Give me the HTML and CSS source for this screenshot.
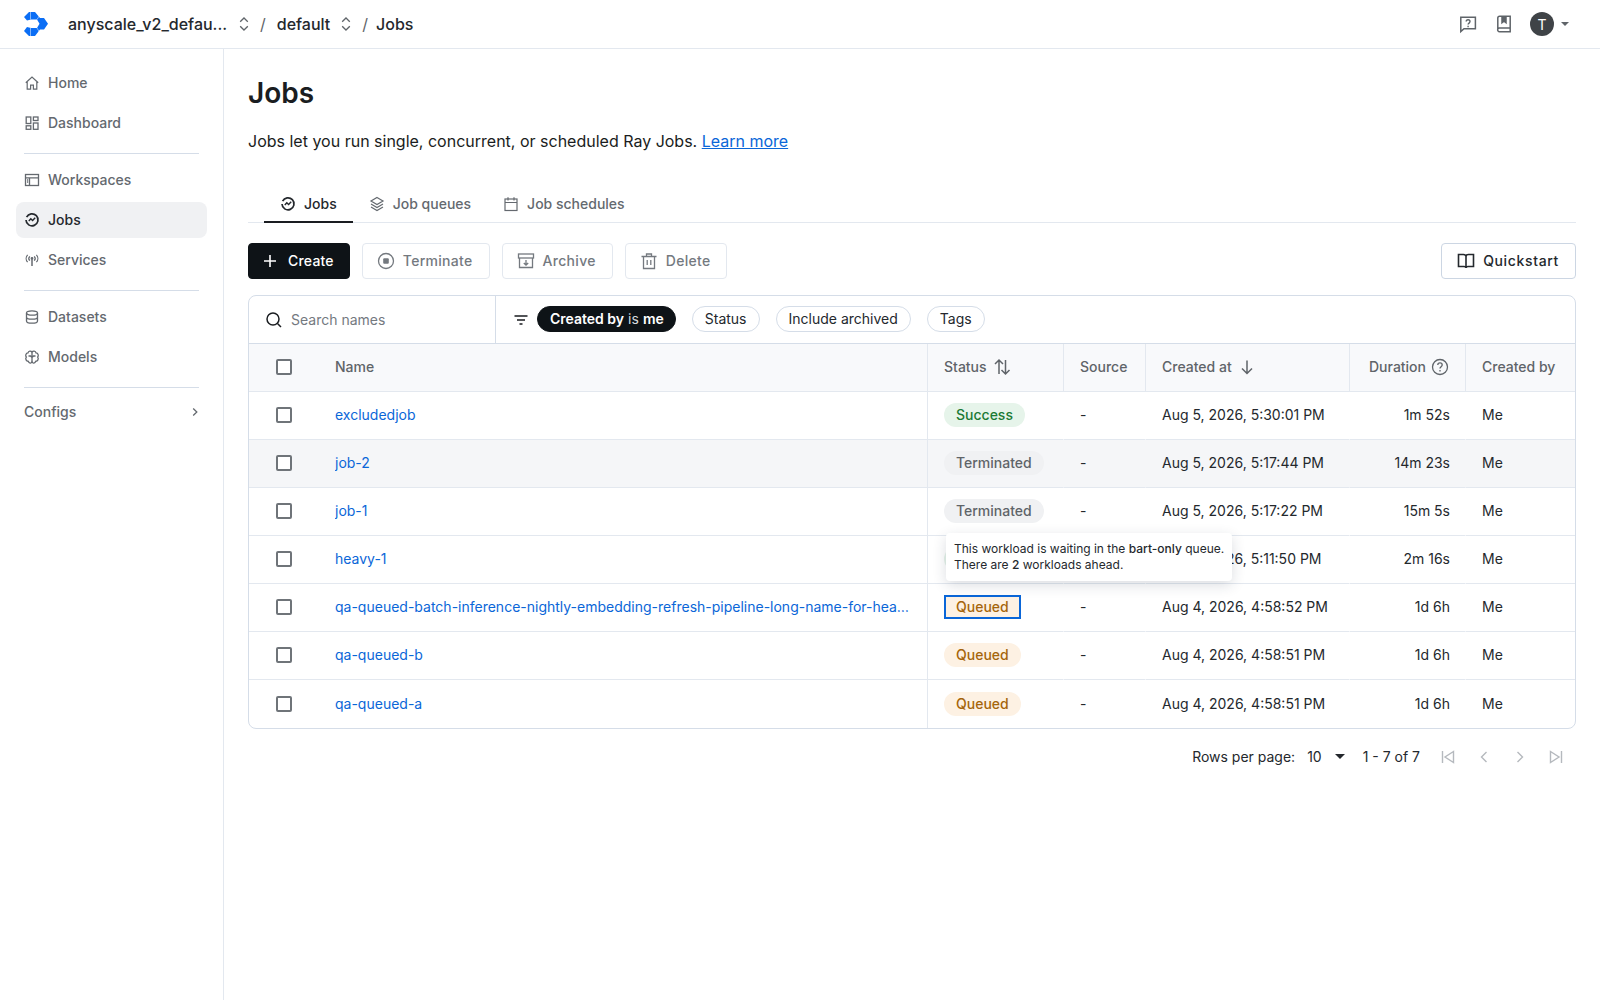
FILE: index.html
```html
<!DOCTYPE html>
<html lang="en">
<head>
    <meta charset="UTF-8">
    <title>Jobs</title>
    <link rel="stylesheet" href="styles.css">
</head>
<body>
<svg class="defs" width="0" height="0">
    <symbol id="i-jobs" viewBox="0 0 16 16">
        <path d="M2.600 5.200A6 6 0 1 1 2 8" fill="none" stroke="currentColor" stroke-width="1.700"/>
        <path d="M4.800 9 6.800 6.800 8.600 8.600 11.200 5.800" fill="none" stroke="currentColor" stroke-width="1.400"/>
    </symbol>
    <symbol id="i-updown" viewBox="0 0 16 16">
        <path d="M4.200 5.800 8 2l3.800 3.800M4.200 10.200 8 14l3.800-3.800" fill="none" stroke="currentColor" stroke-width="1.300"/>
    </symbol>
</svg>

<!--top bar-->
<header class="topbar">
    <svg class="logo" width="24" height="24" viewBox="0 0 24 24">
        <path fill="#0b6ef5" d="M0 5 5 0H11L16 6H20L24 11.700 20 17.500H16L11 24H5L0 19 3 15 7 16H13L15.500 11.700 13 7.500H7L3 8.500Z"/>
        <path d="M6.500 0V7.500M6.500 16V24M13 7.500 16.500 2M13 16 16.500 22" stroke="#fff" stroke-width=".5"/>
    </svg>
    <nav class="crumbs">
        <span class="crumb crumb-project">anyscale_v2_defau...</span>
        <svg class="crumb-icon" width="16" height="16"><use href="#i-updown"/></svg>
        <span class="crumb-sep">/</span>
        <span class="crumb">default</span>
        <svg class="crumb-icon" width="16" height="16"><use href="#i-updown"/></svg>
        <span class="crumb-sep">/</span>
        <span class="crumb crumb-last">Jobs</span>
    </nav>
    <div class="top-actions">
        <svg width="20" height="20" viewBox="0 0 20 20" fill="none" stroke="#5f6469" stroke-width="1.500">
            <path d="M2.800 3.200h14.600v11.600H6L2.800 17.600z"/>
            <path d="M8.200 7.600c0-2.400 3.800-2.400 3.800 0 0 1.500-1.900 1.500-1.900 3" stroke-width="1.400"/>
            <path d="M10.100 11.800v1.400" stroke-width="1.400"/>
        </svg>
        <svg width="20" height="20" viewBox="0 0 20 20" fill="none" stroke="#5f6469" stroke-width="1.500">
            <path d="M3.800 15V4a1.800 1.800 0 0 1 1.800-1.800h10.600v15.600H5.600a2 2 0 0 1-1.800-2.800 1.800 1.800 0 0 1 1.800-1H16.200"/>
            <path d="M8 2.400v6.400l2-1.600 2 1.600V2.400" fill="#5f6469"/>
        </svg>
        <div class="user">
            <span class="avatar">T</span>
            <span class="caret"></span>
        </div>
    </div>
</header>

<div class="layout">
    <!--sidebar-->
    <aside class="sidebar">
        <a class="nav-item">
            <svg width="16" height="16" viewBox="0 0 16 16" fill="none" stroke="currentColor" stroke-width="1.200"><path d="M1.800 7.800 8 2l6.200 5.800M3.200 6.800v7.400h3.400v-4h2.800v4h3.400V6.800"/></svg>
            Home
        </a>
        <a class="nav-item">
            <svg width="16" height="16" viewBox="0 0 16 16" fill="none" stroke="currentColor" stroke-width="1.300"><rect x="2.200" y="2" width="4.600" height="6.500"/><rect x="9.400" y="2" width="4.600" height="3.500"/><rect x="2.200" y="10.800" width="4.600" height="3.500"/><rect x="9.400" y="8" width="4.600" height="6.300"/></svg>
            Dashboard
        </a>
        <div class="nav-line"></div>
        <a class="nav-item">
            <svg width="16" height="16" viewBox="0 0 16 16" fill="none" stroke="currentColor" stroke-width="1.300"><rect x="1.500" y="2.500" width="13" height="11"/><path d="M1.500 5.800h13M5.500 5.800v7.700M3 8h1.200M3 10h1.200"/></svg>
            Workspaces
        </a>
        <a class="nav-item active">
            <svg width="16" height="16"><use href="#i-jobs"/></svg>
            Jobs
        </a>
        <a class="nav-item">
            <svg width="16" height="16" viewBox="0 0 16 16" fill="none" stroke="currentColor" stroke-width="1.200"><path d="M8 7.500v6.500" stroke-width="1.500"/><circle cx="8" cy="6.500" r=".8" fill="currentColor"/><path d="M5.800 4.300a3.200 3.200 0 0 0 0 4.400M10.200 4.300a3.200 3.200 0 0 1 0 4.400M3.600 2.800a5.500 5.500 0 0 0 0 7.400M12.400 2.800a5.500 5.500 0 0 1 0 7.400"/></svg>
            Services
        </a>
        <div class="nav-line"></div>
        <a class="nav-item">
            <svg width="16" height="16" viewBox="0 0 16 16" fill="none" stroke="currentColor" stroke-width="1.300"><ellipse cx="8" cy="4" rx="5.500" ry="2.200"/><path d="M2.500 4v8c0 1.200 2.500 2.200 5.500 2.200s5.500-1 5.500-2.200V4M2.500 8c0 1.200 2.500 2.200 5.500 2.200s5.500-1 5.500-2.200"/></svg>
            Datasets
        </a>
        <a class="nav-item">
            <svg width="16" height="16" viewBox="0 0 16 16" fill="none" stroke="currentColor" stroke-width="1.300"><path d="M8 3.200C7 1.500 4.500 1.800 4 3.800 2 4 1 6.500 2.300 8 1 9.800 2.300 12.500 4.300 12.300 5 14.500 7.200 14.500 8 13c.8 1.500 3 1.500 3.700-.7 2 .2 3.300-2.500 2-4.300C15 6.500 14 4 12 3.800 11.500 1.800 9 1.500 8 3.200Z"/><path d="M8 3.200V13M4.500 7h2l1.500 1.500M11.500 7h-2L8 8.500"/></svg>
            Models
        </a>
        <div class="nav-line"></div>
        <a class="nav-group">
            Configs
            <svg width="16" height="16" viewBox="0 0 16 16" fill="none" stroke="currentColor" stroke-width="1.300"><path d="M6.200 4.500 9.800 8l-3.600 3.500"/></svg>
        </a>
    </aside>

    <!--main-->
    <main class="main">
        <h1 class="title">Jobs</h1>
        <p class="intro">Jobs let you run single, concurrent, or scheduled Ray Jobs. <a href="#" class="link">Learn more</a></p>

        <div class="tabs">
            <a class="tab current"><svg width="16" height="16"><use href="#i-jobs"/></svg>Jobs</a>
            <a class="tab">
                <svg width="16" height="16" viewBox="0 0 16 16" fill="none" stroke="currentColor" stroke-width="1.200"><path d="M8 1.500 14 5 8 8.500 2 5ZM2 8l6 3.500L14 8M2 11l6 3.500 6-3.500"/></svg>
                Job queues
            </a>
            <a class="tab">
                <svg width="16" height="16" viewBox="0 0 16 16" fill="none" stroke="currentColor" stroke-width="1.200"><rect x="2" y="3" width="12" height="11.500"/><path d="M2 6.500h12M5 1.200V4.500M11 1.200V4.500"/></svg>
                Job schedules
            </a>
        </div>

        <div class="actions">
            <a class="btn btn-dark">
                <svg width="16" height="16" viewBox="0 0 16 16" fill="none" stroke="#fff" stroke-width="1.600"><path d="M7 2v12M1 8h12"/></svg>
                Create
            </a>
            <a class="btn">
                <svg width="18" height="18" viewBox="0 0 18 18" fill="none" stroke="currentColor" stroke-width="1.300"><circle cx="9" cy="9" r="7.500"/><rect x="6.200" y="6.200" width="5.600" height="5.600" rx="1" fill="currentColor" stroke="none"/></svg>
                Terminate
            </a>
            <a class="btn">
                <svg width="18" height="18" viewBox="0 0 18 18" fill="none" stroke="currentColor" stroke-width="1.300"><rect x="1.500" y="2" width="15" height="4"/><path d="M2.500 6v9.500h13V6M9 8v5M6.800 11 9 13.200 11.200 11"/></svg>
                Archive
            </a>
            <a class="btn">
                <svg width="18" height="18" viewBox="0 0 18 18" fill="none" stroke="currentColor" stroke-width="1.300"><path d="M1.500 4.500h15M6.500 4.500V2h5v2.500M3.500 4.500v12h11v-12M7.200 8v5M10.800 8v5"/></svg>
                Delete
            </a>
            <a class="btn btn-outline">
                <svg width="18" height="18" viewBox="0 0 18 18" fill="none" stroke="currentColor" stroke-width="1.600"><path d="M9 4.500C9 3.200 8 2.500 6.500 2.500h-5v12h5.500c1 0 2 .5 2 1.500 0-1 1-1.500 2-1.500h5.500v-12h-5C10 2.500 9 3.200 9 4.500ZM9 4.500V16"/></svg>
                Quickstart
            </a>
        </div>

        <div class="panel">
            <div class="filters">
                <div class="search">
                    <svg width="18" height="18" viewBox="0 0 18 18" fill="none" stroke="#1a1d21" stroke-width="1.500"><circle cx="8" cy="8" r="6"/><path d="m12.500 12.500 3.500 3.500"/></svg>
                    <span>Search names</span>
                </div>
                <div class="chips">
                    <svg width="16" height="16" viewBox="0 0 16 16" fill="none" stroke="#1a1d21" stroke-width="1.500"><path d="M1.500 4h13M4 8h8M6.500 12h3"/></svg>
                    <span class="chip chip-on"><b>Created by</b> is <b>me</b></span>
                    <span class="chip">Status</span>
                    <span class="chip">Include archived</span>
                    <span class="chip">Tags</span>
                </div>
            </div>

            <table class="jobs">
                <colgroup>
                    <col class="c-check"><col class="c-name"><col class="c-status"><col class="c-source"><col class="c-created"><col class="c-duration"><col class="c-by">
                </colgroup>
                <thead>
                    <tr>
                        <th class="check"><span class="box"></span></th>
                        <th>Name</th>
                        <th class="split">
                            <span class="th-in">Status
                                <svg width="20" height="20" viewBox="0 0 20 20" fill="none" stroke="#5f6469" stroke-width="1.500"><path d="M7 17V3.500M3 7l4-4 4 4M13.500 3v13.500M9.500 13l4 4 4-4"/></svg>
                            </span>
                        </th>
                        <th class="split">Source</th>
                        <th class="split">
                            <span class="th-in">Created at
                                <svg class="sort" width="16" height="16" viewBox="0 0 16 16" fill="none" stroke="#5f6469" stroke-width="1.500"><path d="M8 1.500v13M3 9.500l5 5 5-5"/></svg>
                            </span>
                        </th>
                        <th class="split num">
                            <span class="th-in">Duration
                                <svg width="18" height="18" viewBox="0 0 18 18" fill="none" stroke="#5f6469" stroke-width="1.300"><circle cx="9" cy="9" r="7.500"/><path d="M6.800 7c0-2.800 4.400-2.800 4.400 0 0 1.700-2.200 1.700-2.200 3.500M9 12v1.400"/></svg>
                            </span>
                        </th>
                        <th class="split">Created by</th>
                    </tr>
                </thead>
                <tbody>
                    <tr>
                        <td class="check"><span class="box"></span></td>
                        <td><a href="#" class="job">excludedjob</a></td>
                        <td class="split"><span class="badge ok">Success</span></td>
                        <td>-</td>
                        <td>Aug 5, 2026, 5:30:01 PM</td>
                        <td class="num">1m 52s</td>
                        <td>Me</td>
                    </tr>
                    <tr class="hover">
                        <td class="check"><span class="box"></span></td>
                        <td><a href="#" class="job">job-2</a></td>
                        <td class="split"><span class="badge off">Terminated</span></td>
                        <td>-</td>
                        <td>Aug 5, 2026, 5:17:44 PM</td>
                        <td class="num">14m 23s</td>
                        <td>Me</td>
                    </tr>
                    <tr>
                        <td class="check"><span class="box"></span></td>
                        <td><a href="#" class="job">job-1</a></td>
                        <td class="split"><span class="badge off">Terminated</span></td>
                        <td>-</td>
                        <td>Aug 5, 2026, 5:17:22 PM</td>
                        <td class="num">15m 5s</td>
                        <td>Me</td>
                    </tr>
                    <tr>
                        <td class="check"><span class="box"></span></td>
                        <td><a href="#" class="job">heavy-1</a></td>
                        <td class="split"><span class="badge ok">Success</span></td>
                        <td>-</td>
                        <td>Aug 5, 2026, 5:11:50 PM</td>
                        <td class="num">2m 16s</td>
                        <td>Me</td>
                    </tr>
                    <tr>
                        <td class="check"><span class="box"></span></td>
                        <td><a href="#" class="job job-long">qa-queued-batch-inference-nightly-embedding-refresh-pipeline-long-name-for-heavy-workloads</a></td>
                        <td class="split">
                            <span class="badge wait focused">Queued
                                <span class="tooltip">This workload is waiting in the <b>bart-only</b> queue.<br>There are <b>2</b> workloads ahead.</span>
                            </span>
                        </td>
                        <td>-</td>
                        <td>Aug 4, 2026, 4:58:52 PM</td>
                        <td class="num">1d 6h</td>
                        <td>Me</td>
                    </tr>
                    <tr>
                        <td class="check"><span class="box"></span></td>
                        <td><a href="#" class="job">qa-queued-b</a></td>
                        <td class="split"><span class="badge wait">Queued</span></td>
                        <td>-</td>
                        <td>Aug 4, 2026, 4:58:51 PM</td>
                        <td class="num">1d 6h</td>
                        <td>Me</td>
                    </tr>
                    <tr class="last">
                        <td class="check"><span class="box"></span></td>
                        <td><a href="#" class="job">qa-queued-a</a></td>
                        <td class="split"><span class="badge wait">Queued</span></td>
                        <td>-</td>
                        <td>Aug 4, 2026, 4:58:51 PM</td>
                        <td class="num">1d 6h</td>
                        <td>Me</td>
                    </tr>
                </tbody>
            </table>
        </div>

        <div class="pager">
            <span>Rows per page:</span>
            <span class="pager-size">10</span>
            <span class="pager-caret"></span>
            <span class="pager-range">1 - 7 of 7</span>
            <div class="pager-btns">
                <svg width="16" height="16" viewBox="0 0 16 16"><path d="M2.500 2v12M13.500 2.500 5 8l8.500 5.500z"/></svg>
                <svg width="16" height="16" viewBox="0 0 16 16"><path d="M10.500 3 5.500 8l5 5"/></svg>
                <svg width="16" height="16" viewBox="0 0 16 16"><path d="M5.500 3l5 5-5 5"/></svg>
                <svg width="16" height="16" viewBox="0 0 16 16"><path d="M13.500 2v12M2.500 2.500 11 8l-8.500 5.500z"/></svg>
            </div>
        </div>
    </main>
</div>
</body>
</html>
```

FILE: styles.css
```css
*{
    box-sizing: border-box;
}
html,body{
    height: 100%;
}
body{
    margin: 0;
    font-family: Inter, "Noto Sans", sans-serif;
    font-size: 14px;
    color: #1a1d21;
    background: #fff;
    overflow: hidden;
}
a{
    text-decoration: none;
    color: inherit;
}
svg{
    flex: none;
    display: block;
}
.defs{
    position: absolute;
}

/*top bar*/
.topbar{
    display: flex;
    align-items: center;
    height: 49px;
    padding: 0 24px;
    border-bottom: 1px solid #e3e8ef;
}
.logo{
    margin-right: 20px;
}
.crumbs{
    display: flex;
    align-items: center;
    font-size: 16px;
    font-weight: 500;
    color: #24282d;
}
.crumb-project{
    width: 160px;
}
.crumb-icon{
    margin-left: 8px;
    color: #5f6469;
}
.crumb-sep{
    margin: 0 11px 0 8px;
    font-weight: 400;
    color: #5f6469;
}
.crumb-last{
    margin-left: -3px;
}
.top-actions{
    display: flex;
    align-items: center;
    gap: 16px;
    margin-left: auto;
    margin-right: 7px;
}
.user{
    display: flex;
    align-items: center;
    gap: 7px;
}
.avatar{
    display: flex;
    align-items: center;
    justify-content: center;
    width: 24px;
    height: 24px;
    border-radius: 50%;
    background: #3f4347;
    color: #fff;
    font-size: 14px;
}
.caret{
    width: 0;
    height: 0;
    border: 4px solid transparent;
    border-top-color: #5f6469;
    border-bottom: 0;
}

.layout{
    display: flex;
    height: 951px;
}

/*sidebar*/
.sidebar{
    flex: none;
    width: 224px;
    padding: 16px 16px 0;
    border-right: 1px solid #e3e8ef;
}
.nav-item{
    display: flex;
    align-items: center;
    gap: 8px;
    height: 36px;
    margin-bottom: 4px;
    padding: 0 8px 1px;
    border-radius: 8px;
    color: #64696f;
    font-weight: 500;
}
.nav-item.active{
    background: #f0f1f3;
    color: #24282d;
}
.nav-line{
    height: 1px;
    margin: 12px 8px 8px;
    background: #d5dde8;
}
.nav-group{
    display: flex;
    align-items: center;
    justify-content: space-between;
    height: 36px;
    padding: 0 4px 5px 8px;
    color: #64696f;
    font-weight: 500;
}

/*main*/
.main{
    flex: 1;
    min-width: 0;
    padding: 26px 24px 0;
}
.title{
    margin: 0 0 18px;
    font-size: 28px;
    line-height: 36px;
    font-weight: 600;
}
.intro{
    margin: 0 0 33px;
    font-size: 16px;
    line-height: 24px;
}
.link{
    color: #0a66d8;
    text-decoration: underline;
}
.tabs{
    display: flex;
    height: 37px;
    padding-left: 16px;
    border-bottom: 1px solid #e3e8ef;
}
.tab{
    display: flex;
    align-items: center;
    gap: 8px;
    height: 37px;
    padding: 0 16px;
    border-bottom: 2px solid transparent;
    color: #64696f;
    font-weight: 500;
}
.tab.current{
    color: #24282d;
    border-bottom-color: #1a1d21;
}
.actions{
    display: flex;
    gap: 12px;
    margin-top: 20px;
}
.btn{
    display: flex;
    align-items: center;
    gap: 8px;
    height: 36px;
    padding: 0 16px 1px 14px;
    border: 1px solid #e3e8ef;
    border-radius: 4px;
    color: #74797f;
    font-weight: 500;
    letter-spacing: .3px;
}
.btn-dark{
    gap: 9px;
    padding-right: 15px;
    background: #0e1317;
    border-color: #0e1317;
    color: #fff;
    letter-spacing: .2px;
}
.btn-outline{
    margin-left: auto;
    padding: 0 16px 1px 15px;
    border-color: #ccd6e3;
    color: #24282d;
    letter-spacing: .65px;
}

/*table*/
.panel{
    margin-top: 16px;
    border: 1px solid #d5dde8;
    border-radius: 8px;
}
.filters{
    display: flex;
    height: 48px;
    border-bottom: 1px solid #d5dde8;
}
.search{
    display: flex;
    align-items: center;
    gap: 8px;
    width: 247px;
    padding-left: 16px;
    border-right: 1px solid #d5dde8;
    color: #74797f;
}
.chips{
    display: flex;
    align-items: center;
    gap: 16px;
    padding-left: 17px;
}
.chips svg{
    margin-right: -8px;
}
.chip{
    display: flex;
    align-items: center;
    gap: 4px;
    height: 26px;
    padding: 0 12px;
    border: 1px solid #d5dde8;
    border-radius: 13px;
    color: #24282d;
    margin-top: -2px;
}
.chip b{
    font-weight: 600;
}
.chip-on{
    padding-right: 11px;
    background: #0e1317;
    border-color: #0e1317;
    color: #d7dade;
}
.chip-on b{
    color: #fff;
}
.jobs{
    width: 100%;
    table-layout: fixed;
    border-collapse: separate;
    border-spacing: 0;
}
.c-check{ width: 70px; }
.c-status{ width: 136px; }
.c-source{ width: 82px; }
.c-created{ width: 204px; }
.c-duration{ width: 116px; }
.c-by{ width: 110px; }
.jobs th,
.jobs td{
    height: 48px;
    padding: 0 16px 2px;
    border-bottom: 1px solid #e3e8ef;
    text-align: left;
    white-space: nowrap;
}
.jobs th{
    background: #f8f9fb;
    color: #5f6469;
    font-weight: 500;
}
.jobs td{
    color: #24282d;
}
.jobs td:nth-child(n+4){
    border-left: 1px solid transparent;
}
.jobs .num{
    text-align: right;
}
.jobs td.num{
    padding-right: 15px;
}
.jobs .split{
    border-left: 1px solid #e3e8ef;
}
.jobs .check{
    padding: 0 0 2px 27px;
}
.jobs .last td{
    padding-bottom: 1px;
    border-bottom: 0;
}
.hover td{
    background: #f5f6f8;
}
.box{
    display: block;
    width: 16px;
    height: 16px;
    border: 2px solid #6f7479;
    border-radius: 2px;
    background: #fff;
}
.th-in{
    display: flex;
    align-items: center;
    gap: 5px;
}
.num .th-in{
    justify-content: flex-end;
}
.th-in .sort{
    margin-left: 2px;
}
.job{
    display: block;
    color: #0a66d8;
    overflow: hidden;
    text-overflow: ellipsis;
}
.badge{
    position: relative;
    display: inline-flex;
    align-items: center;
    height: 24px;
    padding: 0 12px;
    border-radius: 12px;
    font-weight: 500;
}
.ok{
    background: #e6f4ea;
    color: #1b7a35;
}
.off{
    background: #f0f1f3;
    color: #5f6469;
}
.wait{
    background: #fdf1e3;
    color: #a5650b;
}
.focused{
    border-radius: 0;
    outline: 2px solid #0a66d8;
    outline-offset: -2px;
}
.tooltip{
    position: absolute;
    left: 2px;
    bottom: 38px;
    z-index: 2;
    width: 286px;
    padding: 8px;
    border-radius: 4px;
    background: #fff;
    box-shadow: 0 4px 14px rgba(30,45,70,.16);
    color: #24282d;
    font-size: 12px;
    line-height: 16px;
    font-weight: 400;
    white-space: nowrap;
}
.tooltip b{
    font-weight: 500;
}

/*pager*/
.pager{
    display: flex;
    align-items: center;
    justify-content: flex-end;
    height: 55px;
    padding-right: 12px;
    color: #24282d;
}
.pager-size{
    margin-left: 12px;
}
.pager-caret{
    margin-left: 13px;
    border: 5px solid transparent;
    border-top-color: #24282d;
    border-bottom: 0;
}
.pager-range{
    margin-left: 18px;
}
.pager-btns{
    display: flex;
    gap: 20px;
    margin-left: 20px;
}
.pager-btns path{
    fill: none;
    stroke: #b5b9be;
    stroke-width: 1.400;
}
```
